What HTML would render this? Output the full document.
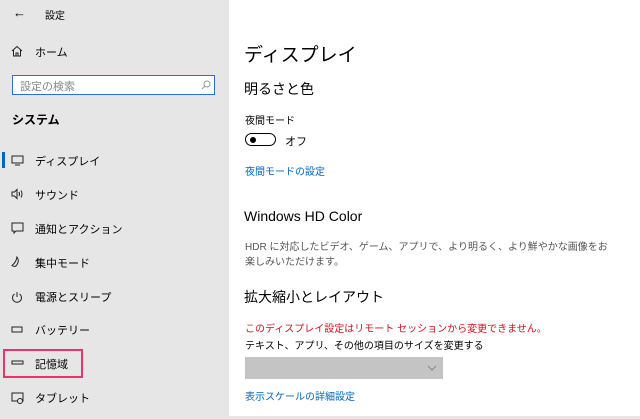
<!DOCTYPE html><html><head><meta charset="utf-8"><style>
body{margin:0;width:640px;height:419px;position:relative;overflow:hidden;background:#fff;font-family:"Liberation Sans","Noto Sans CJK JP",sans-serif;color:#000}
.l{position:absolute;left:0;top:0;width:229px;height:419px;background:#e6e6e6}
.a{position:absolute;white-space:nowrap}
.n{font-size:12px;left:35px}
.i{position:absolute;left:11px}
.blue{color:#0067c0}
</style></head><body>
<div class="l"></div>
<div class="a" style="left:13px;top:5px;font-size:13px">←</div>
<div class="a" style="left:45px;top:7px;font-size:10px">設定</div>
<svg class="i" style="top:45px" width="12" height="12"><path d="M1 6L6 1.5 11 6M2.5 5v6h7V5M5 11V8h2v3" fill="none" stroke="#222" stroke-width="1"/></svg>
<div class="a n" style="top:44px;font-size:11px">ホーム</div>
<div class="a" style="left:12px;top:75px;width:203px;height:20px;border:1px solid #2a6fd6;background:#fff;box-sizing:border-box"></div>
<div class="a" style="left:20px;top:78px;font-size:11px;color:#888">設定の検索</div>
<svg class="a" style="left:201px;top:80px" width="10" height="10"><circle cx="6" cy="4" r="3" fill="none" stroke="#999"/><path d="M4 6L1 9" stroke="#999"/></svg>
<div class="a" style="left:12px;top:111px;font-size:12px;font-weight:bold">システム</div>
<div class="a" style="left:2px;top:152px;width:3px;height:16px;background:#0067c0"></div>
<svg class="i" style="top:155px" width="13" height="11"><rect x="1" y="1" width="11" height="7" fill="none" stroke="#222"/><path d="M4 10h5" stroke="#222"/></svg>
<div class="a n" style="top:153px;font-size:11px">ディスプレイ</div>
<svg class="i" style="top:188px" width="14" height="12"><path d="M1 4h2.5L6 1.5v9L3.5 8H1z" fill="none" stroke="#222"/><path d="M8 4q1 2 0 4M10 2.5q2 3.5 0 7" fill="none" stroke="#222"/></svg>
<div class="a n" style="top:187px;font-size:11px">サウンド</div>
<svg class="i" style="top:222px" width="13" height="12"><path d="M1 1h11v8H5l-2 2V9H1z" fill="none" stroke="#222"/></svg>
<div class="a n" style="top:221px;font-size:11px">通知とアクション</div>
<svg class="i" style="top:256px" width="12" height="12"><path d="M6 1q3 4 -1 9q-2 1 -4 -0.5 q4 -3 5 -8.5z" fill="none" stroke="#222"/></svg>
<div class="a n" style="top:255px;font-size:11px">集中モード</div>
<svg class="i" style="top:291px" width="12" height="12"><path d="M3.5 3A4.5 4.5 0 1 0 8.5 3M6 1v5" fill="none" stroke="#222"/></svg>
<div class="a n" style="top:289px;font-size:11px">電源とスリープ</div>
<svg class="i" style="top:326px" width="13" height="8"><rect x="1" y="1" width="10" height="5" fill="none" stroke="#222"/></svg>
<div class="a n" style="top:322px;font-size:11px">バッテリー</div>
<div class="a" style="left:3px;top:349px;width:80px;height:29px;border:2px solid #e8336d;box-sizing:border-box"></div>
<svg class="i" style="top:360px" width="13" height="6"><rect x="1" y="1" width="11" height="3" fill="none" stroke="#222"/></svg>
<div class="a n" style="top:356px;font-size:11px">記憶域</div>
<svg class="i" style="top:392px" width="14" height="12"><rect x="1" y="1" width="11" height="8" fill="none" stroke="#222"/><circle cx="9" cy="9" r="2.5" fill="#e6e6e6" stroke="#222"/></svg>
<div class="a n" style="top:390px;font-size:11px">タブレット</div>

<div class="a" style="left:244px;top:40px;font-size:19px">ディスプレイ</div>
<div class="a" style="left:244px;top:79px;font-size:14px">明るさと色</div>
<div class="a" style="left:245px;top:112px;font-size:10px">夜間モード</div>
<div class="a" style="left:245px;top:133px;width:31px;height:13px;border:1.5px solid #000;border-radius:8px;box-sizing:border-box"></div>
<div class="a" style="left:250px;top:137px;width:6px;height:6px;border-radius:50%;background:#000"></div>
<div class="a" style="left:285px;top:133px;font-size:11px">オフ</div>
<div class="a blue" style="left:245px;top:163px;font-size:10px">夜間モードの設定</div>
<div class="a" style="left:244px;top:208px;font-size:14px">Windows HD Color</div>
<div class="a" style="left:245px;top:240px;font-size:10px;color:#555;line-height:15px">HDR に対応したビデオ、ゲーム、アプリで、より明るく、より鮮やかな画像をお<br>楽しみいただけます。</div>
<div class="a" style="left:244px;top:287px;font-size:14px">拡大縮小とレイアウト</div>
<div class="a" style="left:245px;top:320px;font-size:10px;color:#d0121c">このディスプレイ設定はリモート セッションから変更できません。</div>
<div class="a" style="left:245px;top:337px;font-size:10px">テキスト、アプリ、その他の項目のサイズを変更する</div>
<div class="a" style="left:245px;top:357px;width:198px;height:22px;background:#c4c4c4"></div>
<svg class="a" style="left:427px;top:365px" width="10" height="6"><path d="M1 1l4 4 4-4" fill="none" stroke="#888"/></svg>
<div class="a blue" style="left:245px;top:388px;font-size:10px">表示スケールの詳細設定</div>
<div class="a" style="left:229px;top:416px;width:411px;height:3px;background:#e6e6e6"></div>
</body></html>
